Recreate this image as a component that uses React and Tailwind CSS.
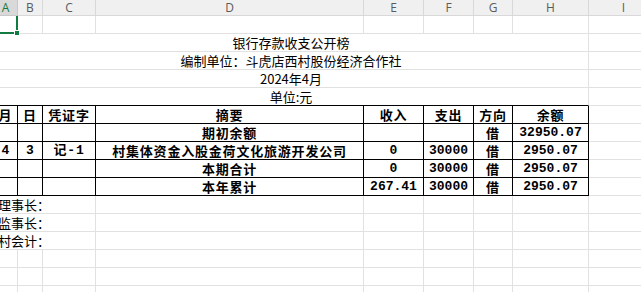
const cols = [
  { key: 'A', w: 'w-[24px]' },
  { key: 'B', w: 'w-[25px]' },
  { key: 'C', w: 'w-[53px]' },
  { key: 'D', w: 'w-[268px]' },
  { key: 'E', w: 'w-[60px]' },
  { key: 'F', w: 'w-[50px]' },
  { key: 'G', w: 'w-[39px]' },
  { key: 'H', w: 'w-[76px]' },
  { key: 'I', w: 'w-[70px]' },
];

const cjk = { fontFamily: '"Noto Sans CJK SC", "Noto Sans", sans-serif' };
const mono = { fontFamily: '"Liberation Mono", "Noto Sans CJK SC", monospace' };

const tableRows = [
  ['月', '日', '凭证字', '摘要', '收入', '支出', '方向', '余额'],
  ['', '', '', '期初余额', '', '', '借', '32950.07'],
  ['4', '3', '记-1', '村集体资金入股金荷文化旅游开发公司', '0', '30000', '借', '2950.07'],
  ['', '', '', '本期合计', '0', '30000', '借', '2950.07'],
  ['', '', '', '本年累计', '267.41', '30000', '借', '2950.07'],
];

function GridRow() {
  return (
    <div className="flex">
      {cols.map((c) => (
        <div key={c.key} className={`${c.w} h-[18px] shrink-0 border-r border-b border-[#e1e1e1]`} />
      ))}
    </div>
  );
}

function TitleRow({ text, black }) {
  return (
    <div className="flex">
      <div
        className={`w-[595px] h-[18px] shrink-0 flex items-center justify-center text-[13px] leading-[17px] text-black border-r border-b ${black ? 'border-b-black border-r-[#e1e1e1]' : 'border-[#e1e1e1]'}`}
        style={cjk}
      >
        {text}
      </div>
      <div className="w-[70px] h-[18px] shrink-0 border-r border-b border-[#e1e1e1]" />
    </div>
  );
}

function TableRow({ cells }) {
  return (
    <div className="flex">
      {cells.map((t, i) => {
        const isCjk = /[\u4e00-\u9fff]/.test(t);
        return (
          <div
            key={i}
            className={`${cols[i].w} h-[18px] shrink-0 border-r border-b border-black flex items-center justify-center whitespace-nowrap font-bold text-[13px] leading-[17px] text-black ${isCjk ? 'tracking-[0.8px]' : ''}`}
            style={isCjk && !/\d/.test(t) ? cjk : mono}
          >
            {t}
          </div>
        );
      })}
      <div className="w-[70px] h-[18px] shrink-0 border-r border-b border-[#e1e1e1]" />
    </div>
  );
}

function SignRow({ text }) {
  return (
    <div className="flex">
      <div
        className="w-[102px] h-[18px] shrink-0 flex items-center pl-[4px] text-[13px] leading-[17px] text-black border-r border-b border-[#e1e1e1]"
        style={cjk}
      >
        {text}
      </div>
      {cols.slice(3).map((c) => (
        <div key={c.key} className={`${c.w} h-[18px] shrink-0 border-r border-b border-[#e1e1e1]`} />
      ))}
    </div>
  );
}

export default function App() {
  return (
    <div className="w-[641px] h-[292px] overflow-hidden bg-white">
      <div className="ml-[-6px] w-[665px]">
        {/* column headers */}
        <div className="flex h-[16px] bg-[#f0f0f0]">
          {cols.map((c) => (
            <div
              key={c.key}
              className={`${c.w} h-[16px] shrink-0 flex items-center justify-center text-[12px] leading-[15px] border-r border-b ${c.key === 'A' ? 'bg-[#d9d9d9] text-[#107c41] border-[#c8c8c8]' : 'text-[#5b5b5b] border-[#d8d8d8]'}`}
              style={{ fontFamily: '"Open Sans", "Liberation Sans", sans-serif' }}
            >
              {c.key}
            </div>
          ))}
        </div>

        {/* row 1 with selected cell */}
        <div className="flex">
          <div className="w-[24px] h-[18px] shrink-0 relative border-r-2 border-b-2 border-[#107c41]">
            <div className="absolute right-[-4px] bottom-[-4px] w-[6px] h-[6px] bg-[#107c41] border border-white" />
          </div>
          {cols.slice(1).map((c) => (
            <div key={c.key} className={`${c.w} h-[18px] shrink-0 border-r border-b border-[#e1e1e1]`} />
          ))}
        </div>

        <TitleRow text="银行存款收支公开榜" />
        <TitleRow text="编制单位：斗虎店西村股份经济合作社" />
        <TitleRow text="2024年4月" />
        <TitleRow text="单位:元" black />

        {tableRows.map((r, i) => (
          <TableRow key={i} cells={r} />
        ))}

        <SignRow text="理事长：" />
        <SignRow text="监事长：" />
        <SignRow text="村会计：" />

        <GridRow />
        <GridRow />
        <GridRow />
      </div>
    </div>
  );
}
